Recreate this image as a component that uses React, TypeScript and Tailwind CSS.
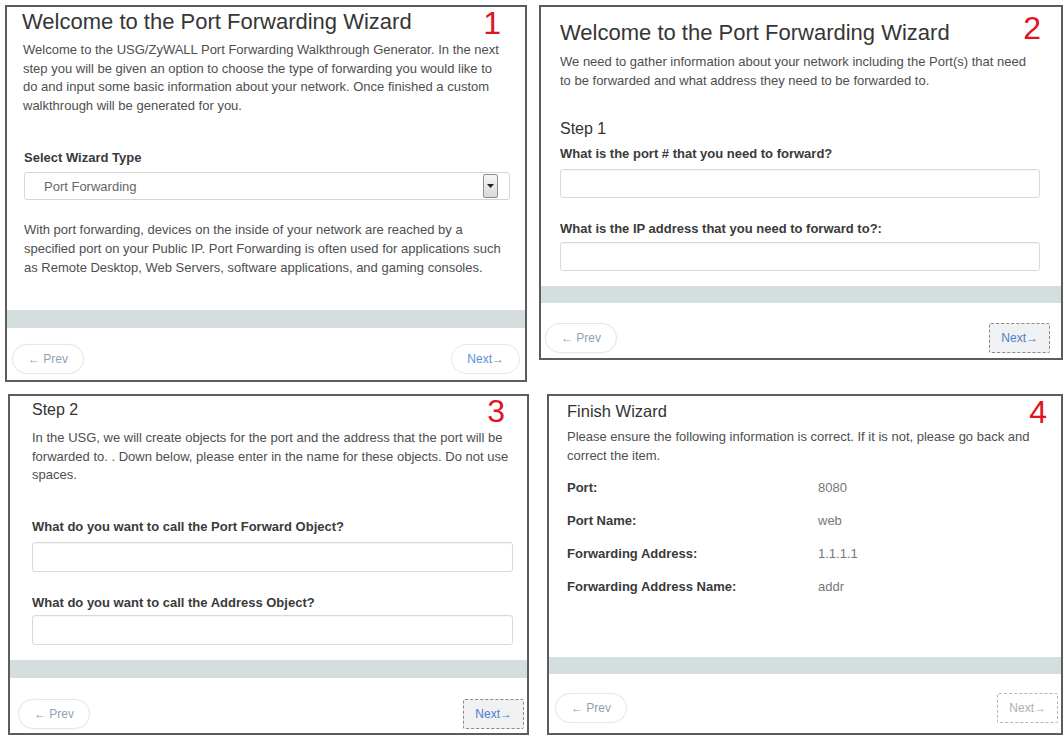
import React from 'react';

const body = "font-['Liberation_Sans',Arial,sans-serif]";

const StepNumber = ({ n, className }: { n: string; className: string }) => (
  <span
    className={`absolute text-[32px] leading-[32px] text-[#e0141e] font-['Liberation_Sans',Arial,sans-serif] ${className}`}
  >
    {n}
  </span>
);

const Band = ({ className }: { className: string }) => (
  <div className={`w-full bg-[#d4dedf] ${className}`} />
);

const PrevButton = ({ className }: { className: string }) => (
  <button
    className={`h-[30px] px-[15px] rounded-full border border-[#e3e7ea] bg-white text-[12px] text-[#8ea2b4] shadow-[0_0_2px_rgba(0,0,0,0.05)] ${className}`}
  >
    ← Prev
  </button>
);

type NextKind = 'pill' | 'focus' | 'disabled';

const NextButton = ({ kind, className }: { kind: NextKind; className: string }) => {
  if (kind === 'pill') {
    return (
      <button
        className={`h-[30px] px-[15px] rounded-full border border-[#e3e7ea] bg-white text-[12px] text-[#5b8fd4] ${className}`}
      >
        Next→
      </button>
    );
  }
  return (
    <button
      className={`h-[30px] px-[11px] rounded-[2px] border border-dashed ${
        kind === 'focus' ? 'border-[#8a8a8a] bg-[#eff1f2] text-[#4f80c8]' : 'border-[#b5b5b5] bg-white text-[#b0b0b0]'
      } text-[12px] ${className}`}
    >
      Next→
    </button>
  );
};

const TextInput = ({ className }: { className: string }) => (
  <div className={`w-full rounded-[3px] border border-[#d9d9d9] bg-white shadow-[inset_0_1px_1px_rgba(0,0,0,0.04)] ${className}`} />
);

const Label = ({ children, className }: { children: React.ReactNode; className: string }) => (
  <div className={`text-[13px] leading-[18px] font-bold text-[#3a3a3a] ${className}`}>{children}</div>
);

const Panel = ({ className, children }: { className: string; children: React.ReactNode }) => (
  <div className={`relative flex flex-col border-2 border-[#5c5c5c] bg-white ${body} ${className}`}>{children}</div>
);

const SummaryRow = ({ label, value }: { label: string; value: string }) => (
  <div className="flex h-[18px] items-center">
    <div className="w-[251px] text-[13px] font-bold text-[#3a3a3a]">{label}</div>
    <div className="text-[13px] text-[#777]">{value}</div>
  </div>
);

const para = 'text-[13px] leading-[18.6px] text-[#4e4e4e]';

export default function App() {
  return (
    <div className={`flex h-[737px] w-[1064px] flex-col bg-white ${body}`}>
      <div className="mt-[5px] flex items-start">
        <Panel className="ml-[5px] h-[377px] w-[522px]">
          <StepNumber n="1" className="top-[0px] right-[24px]" />
          <div className="flex flex-col pl-[15px] pr-[10px]">
            <h1 className="mt-[1px] h-[28px] text-[22px] leading-[28px] text-[#363636]">
              Welcome to the Port Forwarding Wizard
            </h1>
            <p className={`mt-[5px] pl-[1px] pr-[8px] ${para}`}>
              Welcome to the USG/ZyWALL Port Forwarding Walkthrough Generator. In the next step you will be given an
              option to choose the type of forwarding you would like to do and input some basic information about your
              network. Once finished a custom walkthrough will be generated for you.
            </p>
            <Label className="mt-[34px] pl-[2px]">Select Wizard Type</Label>
            <div className="mt-[5px] ml-[2px] mr-[5px] flex h-[28px] items-center justify-between rounded-[3px] border border-[#d6d6d6] bg-white pl-[19px] pr-[11px]">
              <span className="text-[13px] text-[#666]">Port Forwarding</span>
              <div className="flex h-[24px] w-[15px] items-center justify-center rounded-[2px] border border-[#8e8e8e] bg-gradient-to-b from-[#f7f7f7] to-[#d9d9d9]">
                <svg width="7" height="4" viewBox="0 0 7 4">
                  <path d="M0 0h7L3.5 4z" fill="#222" />
                </svg>
              </div>
            </div>
            <p className={`mt-[21px] pl-[2px] ${para}`}>
              With port forwarding, devices on the inside of your network are reached by a specified port on your Public
              IP. Port Forwarding is often used for applications such as Remote Desktop, Web Servers, software
              applications, and gaming consoles.
            </p>
          </div>
          <Band className="mt-[33px] h-[18px]" />
          <div className="mt-[16px] flex justify-between">
            <PrevButton className="ml-[5px]" />
            <NextButton kind="pill" className="mr-[5px]" />
          </div>
        </Panel>

        <Panel className="ml-[12px] h-[355px] w-[524px]">
          <StepNumber n="2" className="top-[5px] right-[20px]" />
          <div className="flex flex-col pl-[19px] pr-[21px]">
            <h1 className="mt-[12px] h-[28px] text-[22px] leading-[28px] text-[#363636]">
              Welcome to the Port Forwarding Wizard
            </h1>
            <p className={`mt-[6px] ${para}`}>
              We need to gather information about your network including the Port(s) that need to be forwarded and what
              address they need to be forwarded to.
            </p>
            <div className="mt-[28px] h-[22px] text-[16px] leading-[22px] text-[#333]">Step 1</div>
            <Label className="mt-[5px]">What is the port # that you need to forward?</Label>
            <TextInput className="mt-[6px] h-[29px]" />
            <Label className="mt-[22px]">What is the IP address that you need to forward to?:</Label>
            <TextInput className="mt-[4px] h-[29px]" />
          </div>
          <Band className="mt-[15px] h-[17px]" />
          <div className="mt-[20px] flex justify-between">
            <PrevButton className="ml-[4px]" />
            <NextButton kind="focus" className="mr-[11px]" />
          </div>
        </Panel>
      </div>

      <div className="mt-[12px] flex items-start">
        <Panel className="ml-[8px] h-[341px] w-[521px]">
          <StepNumber n="3" className="top-[-1px] right-[22px]" />
          <div className="flex flex-col pl-[22px] pr-[14px]">
            <div className="mt-[3px] h-[22px] text-[16px] leading-[22px] text-[#333]">Step 2</div>
            <p className={`mt-[8px] ${para}`}>
              In the USG, we will create objects for the port and the address that the port will be forwarded to. . Down
              below, please enter in the name for these objects. Do not use spaces.
            </p>
            <Label className="mt-[33px]">What do you want to call the Port Forward Object?</Label>
            <TextInput className="mt-[6px] h-[30px] mr-[2px]" />
            <Label className="mt-[22px]">What do you want to call the Address Object?</Label>
            <TextInput className="mt-[3px] h-[30px] mr-[2px]" />
          </div>
          <Band className="mt-[15px] h-[18px]" />
          <div className="mt-[21px] flex justify-between">
            <PrevButton className="ml-[8px]" />
            <NextButton kind="focus" className="mr-[3px]" />
          </div>
        </Panel>

        <Panel className="ml-[18px] h-[341px] w-[516px]">
          <StepNumber n="4" className="top-[0px] right-[14px]" />
          <div className="flex flex-col pl-[18px] pr-[14px]">
            <div className="mt-[5px] h-[20px] text-[16.5px] leading-[20px] text-[#333]">Finish Wizard</div>
            <p className={`mt-[7px] ${para}`}>
              Please ensure the following information is correct. If it is not, please go back and correct the item.
            </p>
            <div className="mt-[14px] flex flex-col gap-[15px]">
              <SummaryRow label="Port:" value="8080" />
              <SummaryRow label="Port Name:" value="web" />
              <SummaryRow label="Forwarding Address:" value="1.1.1.1" />
              <SummaryRow label="Forwarding Address Name:" value="addr" />
            </div>
          </div>
          <Band className="mt-[61px] h-[17px]" />
          <div className="mt-[19px] flex justify-between">
            <PrevButton className="ml-[6px]" />
            <NextButton kind="disabled" className="mr-[3px]" />
          </div>
        </Panel>
      </div>
    </div>
  );
}
